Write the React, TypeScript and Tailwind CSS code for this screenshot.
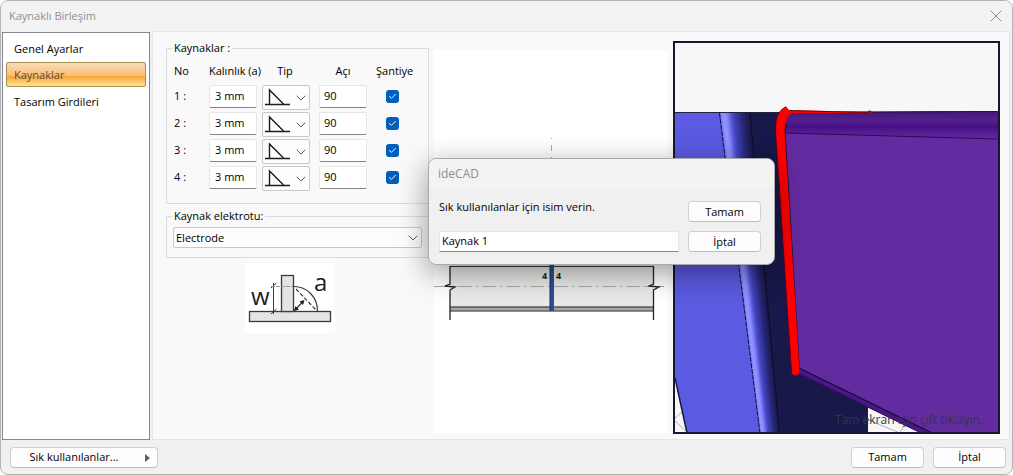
import type { ReactNode } from 'react'
import { Check, ChevronDown, X } from 'lucide-react'

const PAGES = ['Genel Ayarlar', 'Kaynaklar', 'Tasarım Girdileri']
const WELDS = [1, 2, 3, 4]

function Button({ children, className = '' }: { children: ReactNode; className?: string }) {
  return (
    <button
      type="button"
      className={`h-[21px] rounded-[4px] border border-[#d0d0d0] border-b-[#bcbcbc] bg-[#fdfdfd] text-center ${className}`}
    >
      {children}
    </button>
  )
}

function TextBox({ label, value, className = '' }: { label: string; value: string; className?: string }) {
  return (
    <input
      type="text"
      aria-label={label}
      defaultValue={value}
      className={`block h-[23px] w-12 rounded-[2px] border border-[#e6e6e6] border-b-[#868686] bg-white pb-[3px] outline-none ${className}`}
    />
  )
}

function WeldTypeSelect({ label }: { label: string }) {
  return (
    <div className="relative h-[25px] w-12">
      <select aria-label={label} className="size-full appearance-none rounded-[2px] border border-[#c8c8c8] bg-[#fdfdfd]">
        <option value="fillet" aria-label="Köşe kaynağı" />
      </select>
      <svg className="pointer-events-none absolute left-[3px] top-[3px]" width="26" height="18" fill="none" stroke="#1c1c1c">
        <path d="M0 16.5H25" strokeWidth="1.4" />
        <path d="M4.5 16V2L18.5 16" strokeWidth="1.4" />
      </svg>
      <ChevronDown className="pointer-events-none absolute right-[1px] top-[5px] size-4 text-[#5c5c5c]" strokeWidth={1.5} />
    </div>
  )
}

function WeldTable() {
  return (
    <table className="w-[250px] table-fixed border-collapse">
      <colgroup>
        <col className="w-[35px]" />
        <col className="w-[51px]" />
        <col className="w-[54px]" />
        <col className="w-[62px]" />
        <col className="w-[48px]" />
      </colgroup>
      <thead>
        <tr className="h-[29px] whitespace-nowrap">
          <th className="p-0 text-left font-normal">No</th>
          <th className="p-0 text-left font-normal">Kalınlık (a)</th>
          <th className="p-0 pr-1 text-center font-normal">Tip</th>
          <th className="p-0 pr-1 text-center font-normal">Açı</th>
          <th className="p-0 text-left font-normal">Şantiye</th>
        </tr>
      </thead>
      <tbody>
        {WELDS.map((no) => (
          <tr key={no} className="h-[27px] align-top">
            <td className="p-0 pt-[3px]">{no} :</td>
            <td className="p-0">
              <TextBox label={`Kalınlık ${no}`} value="3 mm" className="px-[5px]" />
            </td>
            <td className="p-0 pl-[2px]">
              <WeldTypeSelect label={`Tip ${no}`} />
            </td>
            <td className="p-0 pl-[5px]">
              <TextBox label={`Açı ${no}`} value="90" className="px-1" />
            </td>
            <td className="p-0 pl-[10px] pt-[5px]">
              <label className="relative block size-[13px]">
                <input
                  type="checkbox"
                  defaultChecked
                  aria-label={`Şantiye ${no}`}
                  className="block size-full appearance-none rounded-[3px] bg-[#005fb8]"
                />
                <Check className="pointer-events-none absolute left-[2px] top-[2px] size-[9px] text-white" strokeWidth={2.5} />
              </label>
            </td>
          </tr>
        ))}
      </tbody>
    </table>
  )
}

function ThroatSketch() {
  return (
    <svg width="90" height="70" viewBox="0 0 90 70" className="ml-[79px] mt-[5px] block bg-white" fill="none" stroke="#3a3a3a">
      <rect x="4.5" y="48.5" width="81" height="10" fill="#e4e4e4" strokeWidth="1.3" />
      <rect x="36.5" y="12.5" width="12" height="36" fill="#e4e4e4" strokeWidth="1.3" />
      <path d="M49 23.5C62 23.5 72.5 34 72.5 48" strokeWidth="1.2" />
      <path d="M28.5 20V51M26 25L31.5 20M26 51L31.5 46" />
      <path d="M26 23.5H48" stroke="#999" strokeDasharray="4 1" />
      <path d="M51 26L71 47" strokeWidth="1.2" strokeDasharray="4 2" />
      <path d="M49.5 47.5L58.5 38" strokeWidth="1.2" />
      <path d="M49 48l1.500-5 3.500 3.500zM59.500 37l-5 1.500 3.500 3.500z" fill="#1c1c1c" stroke="none" />
      <g fontSize="24" fill="#1c1c1c" stroke="none">
        <text x="6" y="42">w</text>
        <text x="69" y="28">a</text>
      </g>
    </svg>
  )
}

// Plan view of the beam, cut at both ends with break marks
function BeamSketch() {
  return (
    <svg viewBox="434 50 234 383" className="mt-[18px] h-[383px] w-[234px] shrink-0 bg-white" fill="none">
      <path d="M551.5 138V158" stroke="#aaa" strokeDasharray="1 6 6 6" />
      <rect x="450" y="240" width="204" height="67" fill="#e9e9e7" />
      <path d="M450 266.5H654" stroke="#333" />
      <rect x="450" y="307" width="204" height="4" fill="#a5a5a3" />
      <path d="M450 307H654" stroke="#555" strokeWidth="1.5" />
      <path d="M450 311H654" stroke="#666" strokeWidth="1.5" />
      <path d="M434 286.5H667" stroke="#a8a8a8" strokeDasharray="14 4 2 4" />
      <path d="M450 266V284L445 286L455 287L450 290V320" stroke="#222" strokeWidth="1.3" />
      <path d="M653.5 266V284L649 286L659 287L653.5 290V320" stroke="#222" strokeWidth="1.3" />
      <rect x="550" y="265" width="4" height="46" fill="#2c4f96" />
      <path d="M550 265V311" stroke="#1e2f5c" />
      <g fontSize="9" fill="#1c1c1c" className="font-bold">
        <text x="542" y="279">4</text>
        <text x="556" y="279">4</text>
      </g>
    </svg>
  )
}

const FILLET_SHADES = [
  '#8080f6', '#9090ff', '#9090ff', '#8585fa', '#7070ea', '#5a5ad8', '#4a4ac6', '#4141b6',
  '#3a3aa8', '#34349a', '#2e2e8a', '#28287a', '#24246c', '#20205e', '#1c1c52', '#19194a',
]

// Rounded transition between flange and web, narrower towards the bottom.
// Each slice runs under the next one so that no seam shows.
function filletSlice(i: number) {
  const n = FILLET_SHADES.length
  const top = (k: number) => 720 + (30 * k) / n
  const bottom = (k: number) => 760 + (20 * k) / n
  return `${top(i)},113 ${top(i + 1) + 3},113 ${bottom(i + 1) + 3},433 ${bottom(i)},433`
}

function Preview3D() {
  return (
    <div className="relative mb-[5px] ml-[5px] mt-[9px] min-w-0 flex-1 border-2 border-[#17172f] bg-[#f7f7f7]">
      <svg viewBox="675 43 323 389" preserveAspectRatio="none" className="absolute inset-0 size-full" fill="none">
        <defs>
          <linearGradient id="band" x1="0" y1="112" x2="0" y2="139" gradientUnits="userSpaceOnUse">
            <stop offset="0" stopColor="#46167c" />
            <stop offset="0.3" stopColor="#53208c" />
            <stop offset="0.55" stopColor="#480f86" />
            <stop offset="1" stopColor="#642ba0" />
          </linearGradient>
        </defs>
        <path d="M675 418L682 412M675 421L687 432" stroke="#b0b0b0" />
        <path d="M866 419L900 433M900 433L905 423" stroke="#b0b0b0" />
        <path d="M675 113H721L761 433H687L675 378Z" fill="#5a5ae2" />
        <path d="M675 378L687 433" stroke="#17173a" strokeWidth="1.5" />
        <path d="M750 113H800L868 400V433H779Z" fill="#18184a" />
        {FILLET_SHADES.map((shade, i) => (
          <polygon key={i} points={filletSlice(i)} fill={shade} />
        ))}
        <path d="M719.5 113L760 433" stroke="#101030" strokeDasharray="5 1" />
        <path d="M750 113L779.5 433" stroke="#0c0c28" />
        <path d="M675 112.5H790" stroke="#22223c" />
        <path d="M785 113L998 111V433H921L799 374Z" fill="#4b1688" />
        <path d="M785 133L998 139V433H931L799 368Z" fill="#632ba0" />
        <path d="M785 116Q787 112 794 112L998 111V139L785 133Z" fill="url(#band)" />
        <path d="M785 133L998 139" stroke="#2b0e50" />
        <path d="M790 112.5L998 111.5" stroke="#2b1240" />
        <path d="M799 368L931 432.5" stroke="#180830" strokeWidth="1.2" />
        <path d="M800 374L921 433" stroke="#2b0e50" />
        <path d="M786 124L785 133L799 368" stroke="#25103c" strokeWidth="1.5" />
        <path d="M786 110L868 112V113L790 113Z" fill="#f00" />
        <path d="M788 110.5L868 112.5" stroke="#4a0808" strokeWidth="0.8" />
        <path d="M866.5 113Q867 110.500 869.5 110.500Q872 110.500 872 113Z" fill="#a01010" />
        <path
          d="M786 106.5L789.500 110.500L792 113Q785 117 784.5 130L799.5 371Q799 375.5 795.5 375.5Q792 375 791.5 372L775.5 130Q775 112 786 106.5Z"
          fill="#f00"
        />
        <path d="M786 106.5Q775 112 775.5 130L791.5 372" stroke="#5a0010" strokeWidth="0.8" />
      </svg>
      <p className="absolute bottom-[4px] right-[15px] text-[12px] leading-4 text-[#2c3b45]">Tam ekran için çift tıklayın.</p>
    </div>
  )
}

function FavouriteNameDialog() {
  return (
    <div
      role="dialog"
      aria-labelledby="dialog-title"
      className="absolute left-[427px] top-[157px] w-[347px] overflow-hidden rounded-lg border border-[#a9a9a9] bg-[#f0f0f0] shadow-[0_8px_30px_rgba(0,0,0,0.4)]"
    >
      <h2 id="dialog-title" className="h-[30px] bg-[#f3f3f3] pl-[9px] pt-[7px] text-[12px] leading-4 text-[#8f8f8f]">
        ideCAD
      </h2>
      <div className="flex justify-between pb-3 pl-[10px] pr-[13px] pt-[9px]">
        <div className="w-[240px]">
          <label htmlFor="favourite" className="block h-[33px] pt-px">Sık kullanılanlar için isim verin.</label>
          <input
            id="favourite"
            type="text"
            defaultValue="Kaynak 1"
            className="block h-[21px] w-full border border-[#e6e6e6] border-b-[#868686] bg-white px-[2px] pb-[2px] outline-none"
          />
        </div>
        <div className="flex flex-col gap-[9px] pt-[3px]">
          <Button className="w-[73px]">Tamam</Button>
          <Button className="w-[73px]">İptal</Button>
        </div>
      </div>
    </div>
  )
}

export default function App() {
  return (
    <div className="relative flex h-screen flex-col overflow-hidden rounded-lg border border-[#b4b4b4] bg-[#f0f0f0] font-['Open_Sans',sans-serif] text-[11px] leading-4 text-black">
      <header className="flex h-[30px] shrink-0 items-center justify-between bg-[#f3f3f3] pl-2 pr-[6px]">
        <h1 className="text-[11px] text-[#8f8f8f]">Kaynaklı Birleşim</h1>
        <button type="button" aria-label="Kapat">
          <X className="size-5 text-[#8a8a8a]" strokeWidth={1.2} />
        </button>
      </header>

      <main className="flex min-h-0 flex-1">
        <nav className="ml-px mt-px w-[148px] shrink-0 border border-[#828790] bg-white px-[3px] pt-[2px]">
          {PAGES.map((page) => (
            <a
              key={page}
              href="#"
              className={
                page === 'Kaynaklar'
                  ? 'mb-px flex h-[25px] items-center rounded-[2px] border border-[#a98d55] bg-[linear-gradient(#fbdcb8,#f9bd72_58%,#f8a53a_58%,#fde48c)] pl-[7px] text-[#5a4a3c]'
                  : 'flex h-[27px] items-center pl-2'
              }
            >
              {page}
            </a>
          ))}
        </nav>

        <section className="ml-[2px] mr-[2px] flex min-w-0 flex-1 border border-[#e5e5e5] bg-[#f9f9f9] pl-[13px] pr-[9px]">
          <div className="mr-[5px] w-[263px] shrink-0 pt-2">
            <fieldset className="border border-[#dcdcdc] pb-[10px] pl-[7px]">
              <legend className="-ml-[2px] px-[2px]">Kaynaklar :</legend>
              <WeldTable />
            </fieldset>
            <fieldset className="mt-1 border border-[#dcdcdc] px-[6px] pb-[9px]">
              <legend className="-ml-px px-[2px]">Kaynak elektrotu:</legend>
              <div className="relative mt-[3px]">
                <select
                  aria-label="Kaynak elektrotu"
                  className="block h-[21px] w-full appearance-none rounded-[2px] border border-[#c8c8c8] bg-[#fdfdfd] px-[2px]"
                >
                  <option>Electrode</option>
                </select>
                <ChevronDown className="pointer-events-none absolute right-[1px] top-[3px] size-4 text-[#5c5c5c]" strokeWidth={1.5} />
              </div>
            </fieldset>
            <ThroatSketch />
          </div>
          <BeamSketch />
          <Preview3D />
        </section>
      </main>

      <footer className="flex h-[34px] shrink-0 items-center gap-[9px] pl-[9px] pr-[6px]">
        <Button className="relative mr-auto w-[148px] pr-5">
          Sık kullanılanlar...
          <svg className="absolute right-[7px] top-[6px]" width="5" height="8" fill="#606060">
            <path d="M0 0L5 4L0 8Z" />
          </svg>
        </Button>
        <Button className="w-[73px]">Tamam</Button>
        <Button className="w-[73px]">İptal</Button>
      </footer>

      <FavouriteNameDialog />
    </div>
  )
}
